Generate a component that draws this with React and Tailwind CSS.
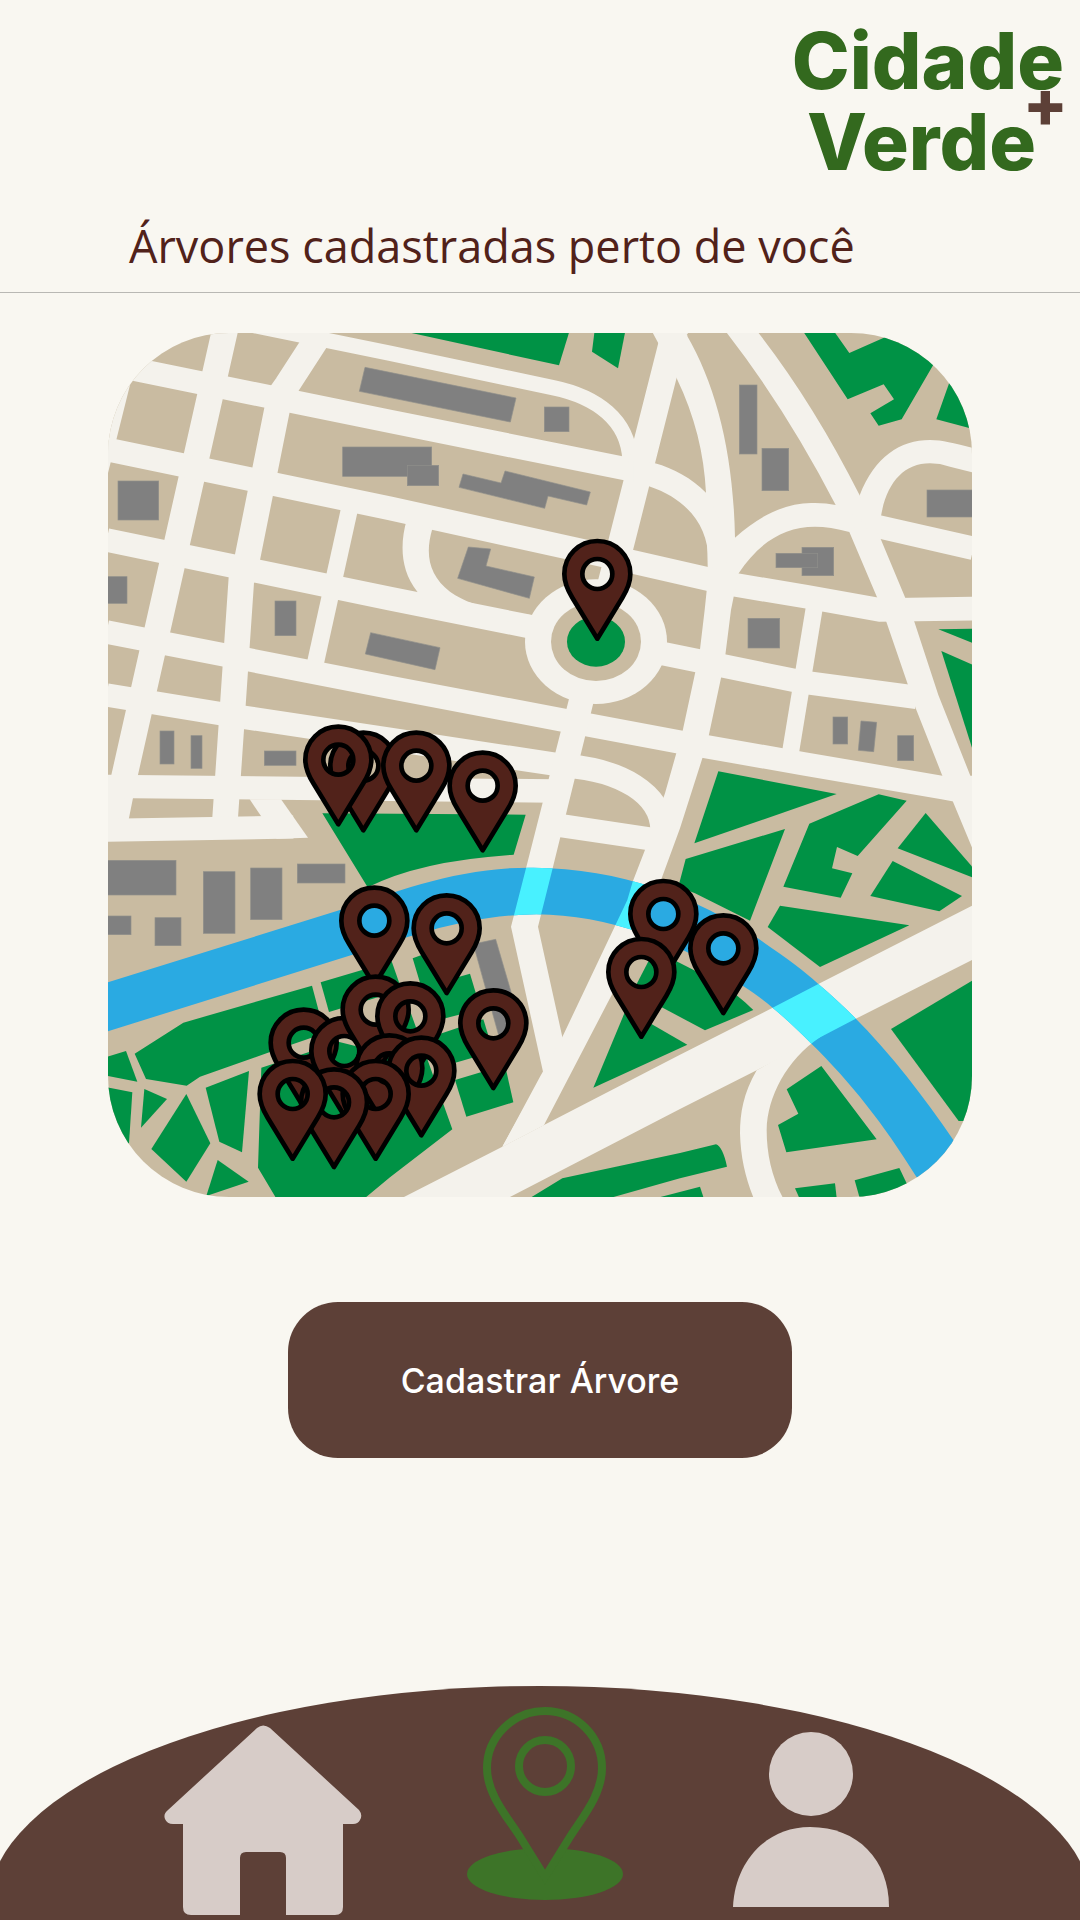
const ROAD = "#f4f2ec";

// Roads of constant width, as centre lines: [path, width]
const streets = [
  ["M92 30L-18 470", 76],
  ["M375 30L66 1400L40 1530", 78],
  ["M664 36L561 195L540 225L436 744L424 780L375 1500", 77],
  ["M750 560L645 1035", 51],
  ["M2145 850L2071 1300", 51],
  ["M440 12L870 100L1360 203C1490 230 1585 300 1590 420", 46],
  ["M20 131L870 304L1650 461", 70],
  ["M20 388L870 565L1600 726L1820 776L1907 795L2118 830L2340 870L2620 866", 71],
  ["M20 660L870 836L1290 920", 71],
  ["M1680 999L2106 1086L2450 1132", 70],
  ["M20 936L870 1102L1430 1208L1738 1266L2110 1331L2530 1403L2620 1420", 70],
  ["M20 1125L400 1187L870 1258L1400 1338C1560 1350 1685 1420 1686 1530", 70],
  ["M20 1399L870 1408L1360 1413", 70],
  ["M20 1531L580 1521", 69],
  ["M1350 1512L1660 1558", 69],
  ["M1724 36L1566 660L1530 800", 79],
  ["M2300 612L2620 685", 70],
];

const avenue =
  "M910 2632L1207 2480L1332 2415L1740 2204L2015 2065L2155 1992L2620 1755V1918L2270 2095L1970 2251L1740 2367L1228 2632Z";
const bridgeWest =
  "M1410 1125L1278 1645L1233 1820L1330 2260L1207 2480L1332 2415L1387 2151L1314 1820L1358 1645L1486 1125Z";
const bridgeEast =
  "M1824 740L1820 812L1814 870L1800 988L1786 1056L1748 1232L1695 1420L1634 1592L1598 1685L1582 1740L1545 1818L1387 2151L1320 2270L1207 2480L1332 2415L1535 2025L1618 1840L1685 1675L1740 1525L1807 1315L1826 1248L1863 1074L1876 1005L1893 870L1915 761Z";
const southRamp =
  "M1970 2251C1930 2320 1920 2380 1920 2440C1922 2510 1935 2570 1960 2632H2048C2015 2570 2000 2500 2000 2430C2002 2330 2060 2220 2160 2152L2200 2120Z";

const crossings = [avenue, bridgeWest, bridgeEast, southRamp];

const junctions = [
  "M449 1438H543L624 1553L530 1556L483 1488Z",
  "M920 600C900 670 900 750 952 815L960 835L1300 925L1292 885C1160 868 1100 850 1050 815C985 765 975 700 997 626Z",
  "M1658 38L1675 70L1730 175C1785 290 1812 400 1818 518L1824 780L1915 765L1905 653C1900 400 1850 200 1760 45L1765 38Z",
  "M1600 420L1665 430C1720 445 1775 475 1818 518L1860 600V760L1824 745C1835 630 1770 540 1647 499L1600 490Z",
  "M1880 38Q2060 270 2207 555L2248 636L2332 834L2360 908L2423 1092L2448 1167L2527 1367L2558 1443L2620 1592V1367H2611L2515 1125L2443 905L2416 834L2343 659L2279 526Q2140 250 1975 38Z",
  "M1905 653C1985 580 2070 545 2145 549Q2180 549 2207 555L2290 600L2248 636Q2190 620 2145 620C2050 620 1975 670 1915 761L1860 780Z",
  "M2279 526C2325 410 2400 360 2490 360C2530 360 2560 370 2620 384V458L2550 440Q2520 430 2490 430C2410 430 2360 490 2343 588L2300 630Z",
];

const river =
  "M20 1988L720 1770C900 1712 1080 1640 1300 1643C1560 1645 1790 1730 1978 1858C2060 1915 2110 1950 2155 1992C2320 2130 2450 2300 2558 2457L2700 2680H2520L2448 2569C2350 2410 2250 2285 2135 2172C2070 2105 1995 2040 1935 2002C1740 1860 1520 1785 1310 1783C1100 1785 940 1847 755 1905L20 2135Z";

const parks = [
  "M930 38H1407L1377 136Z",
  "M1483 38H1575L1554 145L1476 95Z",
  "M2112 38H2205L2248 99L2386 38H2556L2405 298L2336 317L2311 280L2382 238L2351 193L2243 238Z",
  "M2509 298L2555 168H2620V327Z",
  "M2515 928L2620 926V970Z",
  "M2524 993L2620 1035V1296Z",
  "M1855 1354L2210 1422L1783 1570Z",
  "M1757 1617L2055 1527L1950 1802L1785 1720L1735 1700Z",
  "M2128 1511L2336 1423L2420 1442L2273 1608L2211 1581L2196 1645L2257 1660L2222 1733L2050 1700Z",
  "M2477 1479L2620 1644V1673L2393 1585Z",
  "M2378 1623L2586 1728L2518 1774L2311 1728Z",
  "M2040 1757L2428 1816L2160 1941L2003 1821Z",
  "M2620 1980L2373 2127L2576 2403H2620Z",
  "M2164 2238L2330 2458L2059 2497L2034 2415L2095 2381L2060 2308Z",
  "M2085 2605L2205 2590L2210 2634H2098Z",
  "M2264 2581L2398 2544L2441 2634H2279Z",
  "M1290 2634L1387 2575L1740 2499L1848 2473Q1868 2480 1881 2540L1740 2575L1530 2634Z",
  "M1670 2634L1800 2600L1811 2634Z",
  "M1578 2068L1762 2174L1480 2303Z",
  "M1655 1905L1728 1923L1850 1985Q1910 2020 1960 2070L1815 2131L1598 2015Z",
  "M667 1480L1277 1484L1241 1604Q960 1622 803 1702Z",
  "M104 2201L250 2108L636 1997L674 2140L508 2197L300 2270L260 2297L138 2277Z",
  "M20 2211L78 2193L112 2285L20 2267Z",
  "M20 2302L97 2317L87 2470H20Z",
  "M133 2307L201 2337L123 2423Z",
  "M259 2322L331 2470L259 2585L154 2487Z",
  "M317 2303L447 2253L426 2497L358 2465Z",
  "M353 2520L446 2585L319 2628Z",
  "M484 2243L718 2166L775 2180L925 2058L1057 2428L870 2572L795 2634H528L474 2543Z",
  "M662 1987L875 1924L905 2010L687 2076Z",
  "M938 1915L1000 1892L1030 1984L1110 1961L1142 2068L995 2105Z",
  "M1010 2145L1150 2098L1180 2195L1040 2236Z",
  "M1065 2280L1215 2235L1240 2347L1099 2390Z",
];

// Buildings with upright walls: [x, y, width, height]
const buildings = [
  [1333, 261, 74, 74],
  [728, 381, 267, 88],
  [922, 436, 94, 61],
  [54, 483, 122, 117],
  [20, 770, 61, 80],
  [525, 843, 63, 104],
  [180, 1233, 42, 99],
  [273, 1247, 33, 98],
  [493, 1293, 95, 43],
  [20, 1621, 208, 104],
  [310, 1655, 95, 185],
  [452, 1644, 94, 155],
  [592, 1632, 143, 57],
  [20, 1788, 73, 56],
  [165, 1793, 78, 84],
  [1918, 195, 53, 207],
  [1986, 385, 80, 127],
  [2481, 510, 140, 81],
  [2106, 682, 95, 85],
  [2028, 700, 125, 43],
  [1944, 895, 95, 89],
  [2199, 1191, 44, 81],
  [2393, 1247, 48, 75],
];

const slantedBuildings = [
  "M795 142L1248 234L1231 306L778 214Z",
  "M1089 462L1203 489L1215 453L1471 516L1460 555L1344 528L1334 565L1077 502Z",
  "M1105 681L1172 687L1158 738L1303 771L1288 835L1073 775Z",
  "M812 938L1020 983L1005 1049L796 1002Z",
  "M2283 1203L2330 1207L2321 1295L2275 1291Z",
  "M1120 1872L1187 1858L1268 2135L1198 2153Z",
];

const trees = [
  [1492, 762],
  [790, 1337],
  [715, 1319],
  [949, 1337],
  [1148, 1397],
  [823, 1802],
  [1040, 1825],
  [1180, 2110],
  [1690, 1782],
  [1624, 1956],
  [1870, 1885],
  [611, 2168],
  [733, 2193],
  [827, 2069],
  [931, 2089],
  [868, 2245],
  [964, 2252],
  [827, 2322],
  [702, 2347],
  [578, 2322],
];

function TreePin({ x, y }) {
  return (
    <path
      transform={`translate(${x} ${y})`}
      d="M0 -99C55 -99 99 -55 99 0C99 28 88 50 75 71L0 194L-75 71C-88 50 -99 28 -99 0C-99 -55 -55 -99 0 -99ZM0 -45A45 45 0 1 0 0 45A45 45 0 1 0 0 -45Z"
      fill="#51221a"
      fillRule="evenodd"
      stroke="#000"
      strokeWidth="14"
      strokeLinejoin="round"
    />
  );
}

function TreeMap() {
  return (
    <svg
      viewBox="24 39 2592 2592"
      role="img"
      aria-label="Mapa das árvores cadastradas"
      className="mx-auto mt-10 block w-4/5 rounded-[14%]"
    >
      <defs>
        <clipPath id="river-area">
          <path d={river} />
        </clipPath>
      </defs>
      <rect x="20" y="35" width="2600" height="2600" fill="#c9bba1" />
      <g fill="none" stroke={ROAD}>
        {streets.map(([d, width]) => (
          <path key={d} d={d} strokeWidth={width} />
        ))}
      </g>
      <g fill={ROAD}>
        {junctions.map((d) => (
          <path key={d} d={d} />
        ))}
        {crossings.map((d) => (
          <path key={d} d={d} />
        ))}
        <ellipse cx="1488" cy="965" rx="213" ry="187" />
      </g>
      <ellipse cx="1488" cy="965" rx="135" ry="118" fill="#c9bba1" />
      <ellipse cx="1488" cy="965" rx="87" ry="75" fill="#009245" />
      <g fill="#009245">
        {parks.map((d) => (
          <path key={d} d={d} />
        ))}
      </g>
      <path d={river} fill="#2aaae2" />
      <g fill="#48f1ff" clipPath="url(#river-area)">
        {crossings.map((d) => (
          <path key={d} d={d} />
        ))}
      </g>
      <g fill="#808080" stroke="#8f8f8b" strokeWidth="2">
        {buildings.map(([x, y, w, h]) => (
          <rect key={`${x}-${y}`} x={x} y={y} width={w} height={h} />
        ))}
        {slantedBuildings.map((d) => (
          <path key={d} d={d} />
        ))}
      </g>
      {trees.map(([x, y]) => (
        <TreePin key={`${x}-${y}`} x={x} y={y} />
      ))}
    </svg>
  );
}

function HomeIcon() {
  return (
    <svg viewBox="164 1724 198 191" className="h-[191px] w-[198px]" fill="#d7ccc8" aria-hidden="true">
      <path d="M257 1728Q263 1723 270 1728L359 1810Q363 1815 360 1820Q358 1824 353 1824H343V1907Q343 1915 335 1915H286V1858Q286 1852 280 1852H246Q240 1852 240 1858V1915H191Q183 1915 183 1907V1824H173Q167 1824 165 1819Q163 1814 168 1810Z" />
    </svg>
  );
}

function LocationIcon() {
  return (
    <svg viewBox="467 1706 157 194" className="h-[194px] w-[157px]" aria-hidden="true">
      <ellipse cx="545" cy="1874" rx="78" ry="26" fill="#3d7428" />
      <g fill="#5d4037" stroke="#3d7428" strokeWidth="8">
        <path d="M545 1711C577 1711 602 1737 602 1768C602 1796 580 1820 568 1840L545 1877L522 1840C510 1820 487 1796 487 1768C487 1737 513 1711 545 1711Z" />
        <circle cx="545" cy="1766" r="26" />
      </g>
    </svg>
  );
}

function PersonIcon() {
  return (
    <svg viewBox="733 1731 156 176" className="h-[176px] w-[156px]" fill="#d7ccc8" aria-hidden="true">
      <circle cx="811" cy="1774" r="42" />
      <path d="M733 1907C735 1862 766 1827 810 1827C858 1827 889 1860 889 1907Z" />
    </svg>
  );
}

export default function App() {
  return (
    <div className="flex min-h-screen flex-col overflow-hidden bg-[#f9f7f1] font-['Inter',sans-serif]">
      <header className="border-b border-[#b9b8b4] pt-5 pb-[14px]">
        <div className="flex justify-end pr-4">
          <div className="relative text-right text-[78px] leading-[81px] font-extrabold text-[#33691e]">
            <div>Cidade</div>
            <div className="pr-7">Verde</div>
            <span className="absolute -right-1 top-12 text-[66px] leading-[70px] text-[#5d4037]">+</span>
          </div>
        </div>
        <h1 className="mt-8 pl-[129px] font-['Open_Sans',sans-serif] text-[45px] leading-[64px] text-[#51221a]">
          Árvores cadastradas perto de você
        </h1>
      </header>

      <main className="flex flex-col">
        <TreeMap />
        <button
          type="button"
          className="mx-auto mt-[105px] mb-16 h-[156px] w-[504px] rounded-[50px] bg-[#5d4037] text-[34px] font-medium text-white"
        >
          Cadastrar Árvore
        </button>
      </main>

      <nav
        aria-label="Principal"
        className="-mx-3 mt-auto flex h-[234px] items-end justify-center rounded-t-[50%_221px] bg-[#5d4037] pr-7"
      >
        <a href="#inicio" aria-label="Início" className="mb-[5px]">
          <HomeIcon />
        </a>
        <a href="#mapa" aria-label="Mapa" className="mb-5 ml-[105px]">
          <LocationIcon />
        </a>
        <a href="#perfil" aria-label="Perfil" className="mb-[13px] ml-[109px]">
          <PersonIcon />
        </a>
      </nav>
    </div>
  );
}
